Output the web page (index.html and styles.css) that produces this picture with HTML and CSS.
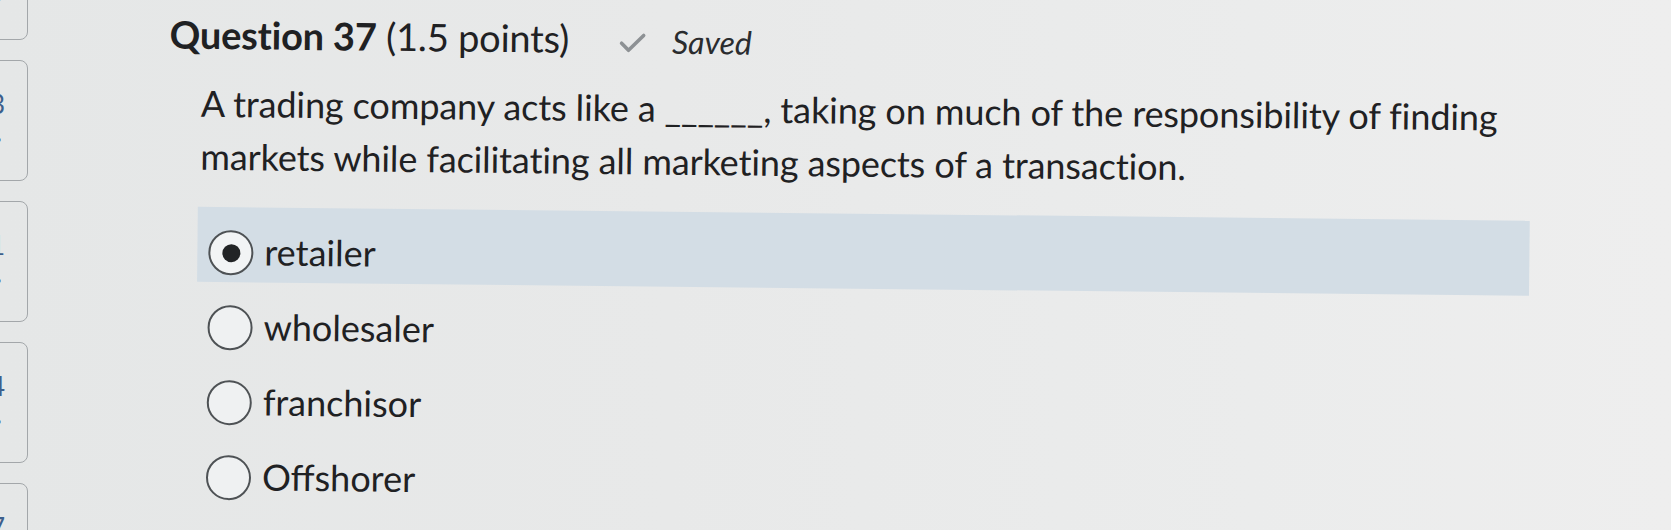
FILE: index.html
```html
<!DOCTYPE html>
<html lang="en">
<head>
<meta charset="utf-8">
<title>Question 37</title>
<link rel="stylesheet" href="styles.css">
</head>
<body>
<div class="page">
  <nav class="qnav">
    <div class="qbox"><span class="num">2</span><span class="dot">•</span></div>
    <div class="qbox"><span class="num">3</span><span class="dot">•</span></div>
    <div class="qbox"><span class="num">1</span><span class="dot">•</span></div>
    <div class="qbox"><span class="num">4</span><span class="dot">•</span></div>
    <div class="qbox"><span class="num">7</span><span class="dot">•</span></div>
  </nav>
  <main class="question">
    <header class="qhead">
      <h1 class="qtitle"><strong>Question 37</strong> <span class="pts">(1.5 points)</span></h1>
      <span class="saved">
        <svg class="check" width="28" height="22" viewBox="0 0 28 22" aria-hidden="true"><path d="M3 11 L10 18 L25 3" fill="none" stroke="#8d9194" stroke-width="3.6" stroke-linecap="round" stroke-linejoin="round"/></svg>
        <em>Saved</em>
      </span>
    </header>
    <p class="qtext">A trading company acts like a ______, taking on much of the responsibility of finding markets while facilitating all marketing aspects of a transaction.</p>
    <ul class="options">
      <li class="opt selected"><span class="radio"><span class="fill"></span></span><span class="label">retailer</span></li>
      <li class="opt"><span class="radio"></span><span class="label">wholesaler</span></li>
      <li class="opt"><span class="radio"></span><span class="label">franchisor</span></li>
      <li class="opt"><span class="radio"></span><span class="label">Offshorer</span></li>
    </ul>
  </main>
</div>
</body>
</html>
```
FILE: styles.css
```css
html, body {
  margin: 0;
  padding: 0;
}
body {
  width: 1671px;
  height: 530px;
  overflow: hidden;
  background: linear-gradient(90deg, #e5e7e7 0%, #e8e9e9 40%, #ebecec 75%, #eeeeee 100%);
  font-family: Lato, "Noto Sans", sans-serif;
  color: #1f2123;
}
.page {
  display: flex;
  align-items: flex-start;
}
.qnav {
  width: 28px;
  flex: none;
  display: flex;
  flex-direction: column;
  gap: 20px;
  margin-top: -81px;
  overflow: hidden;
}
.qbox {
  box-sizing: border-box;
  width: 60px;
  height: 121px;
  margin-left: -32px;
  border: 1.5px solid #a3a7aa;
  border-radius: 8px;
  display: flex;
  flex-direction: column;
  align-items: flex-end;
  padding: 30px 22px 0 0;
  font-size: 26px;
  line-height: 1;
}
.qbox .num {
  color: #3d5f8c;
}
.qbox .dot {
  color: #333;
  font-size: 16px;
  margin-top: 14px;
  margin-right: 3px;
}
.question {
  flex: 1;
  padding-left: 142px;
  transform: rotate(0.6deg);
  transform-origin: 0 0;
}
.qhead {
  display: flex;
  align-items: baseline;
  height: 62px;
  padding-top: 3px;
  box-sizing: border-box;
}
.qtitle {
  margin: 0;
  font-size: 38px;
  font-weight: 400;
  line-height: 58px;
  letter-spacing: -0.2px;
}
.qtitle strong {
  font-weight: 700;
}
.saved {
  display: inline-flex;
  align-items: baseline;
  margin-left: 50px;
  color: #2a2c2e;
}
.check {
  align-self: center;
  margin-right: 25px;
  position: relative;
  top: 2px;
}
.saved em {
  font-size: 32px;
  font-style: italic;
}
.qtext {
  margin: 13px 0 0 32px;
  width: 1360px;
  font-size: 36px;
  line-height: 53px;
  letter-spacing: -0.1px;
}
.options {
  list-style: none;
  margin: 24px 0 0 30px;
  padding: 0;
  width: 1332px;
}
.opt {
  display: flex;
  align-items: center;
  height: 75px;
  padding: 16px 0 0 11px;
  box-sizing: border-box;
  gap: 11px;
}
.opt.selected {
  background: #d3dde5;
}
.radio {
  box-sizing: border-box;
  width: 45px;
  height: 45px;
  border-radius: 50%;
  border: 2px solid #4e5255;
  background: #eff1f2;
  display: flex;
  align-items: center;
  justify-content: center;
  flex: none;
}
.opt.selected .radio {
  background: #f2f4f5;
}
.fill {
  width: 18px;
  height: 18px;
  border-radius: 50%;
  background: #222426;
}
.label {
  font-size: 36px;
  line-height: 1;
  padding-bottom: 4px;
}
```
